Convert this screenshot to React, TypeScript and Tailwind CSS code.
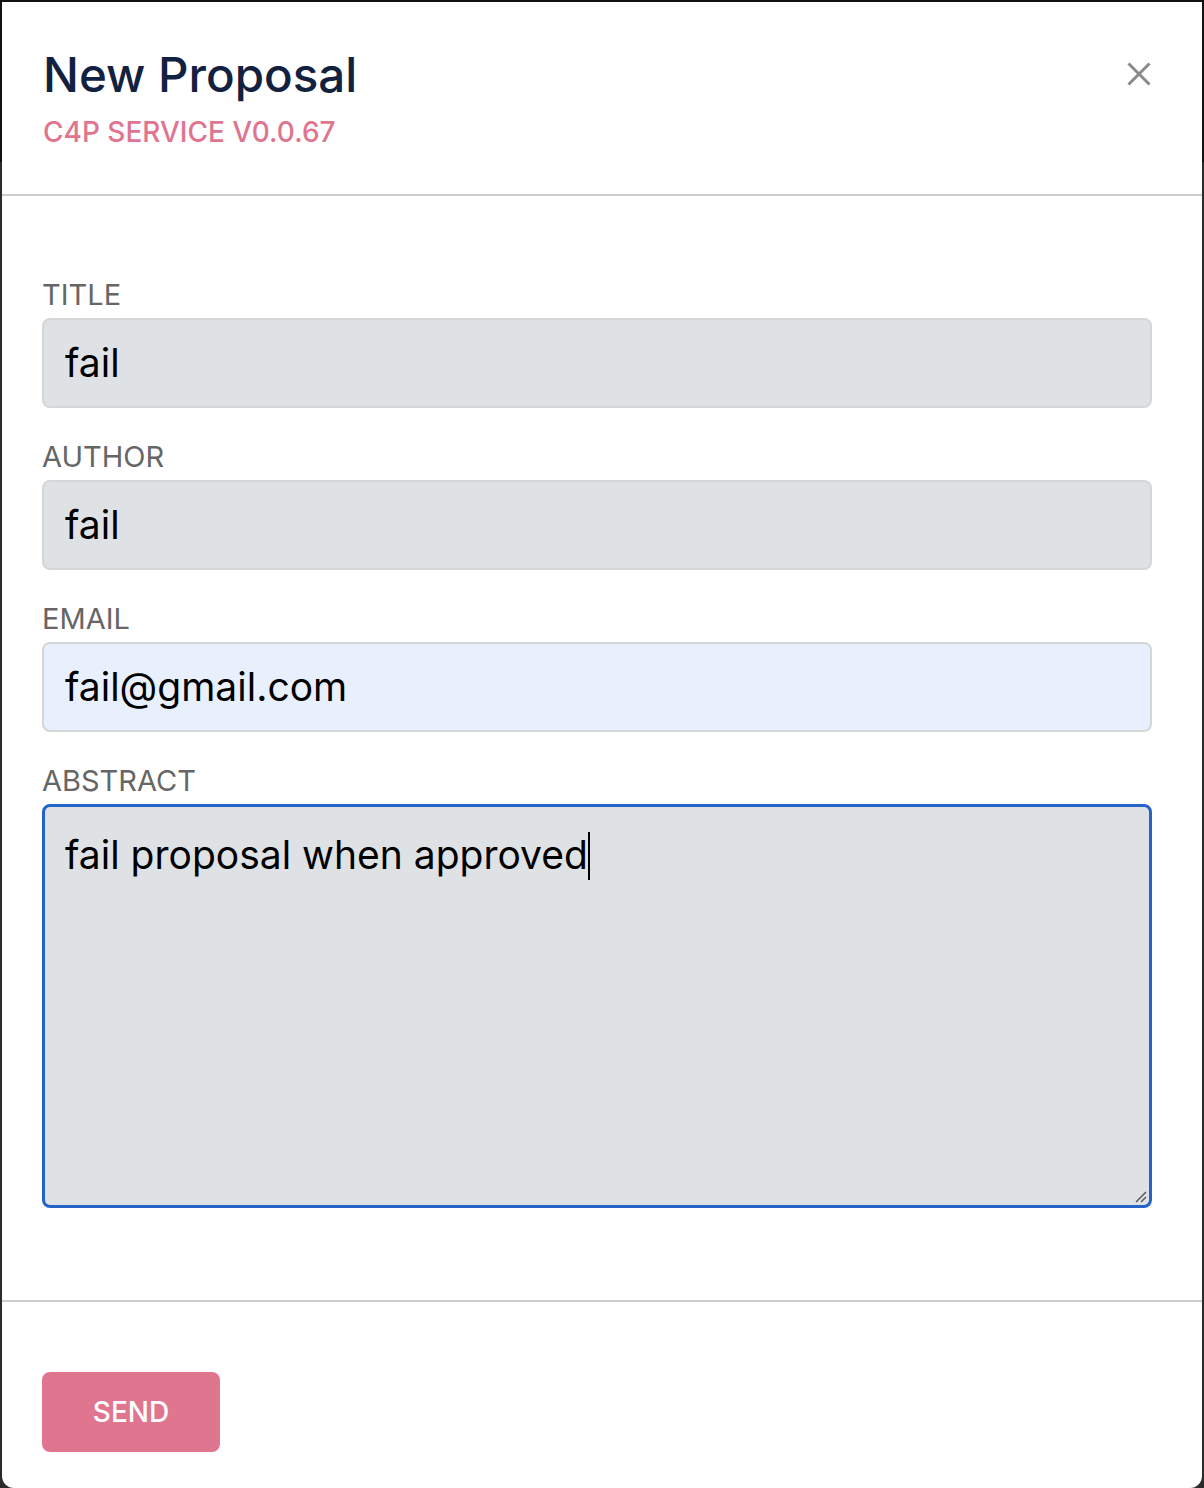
import React from "react";

function Field({ label, value, bg }: { label: string; value: string; bg: string }) {
  return (
    <div className="flex flex-col">
      <label className="text-[29px] leading-[34px] text-[#666666]">{label}</label>
      <div
        className={`mt-[6px] h-[90px] rounded-[8px] border-2 border-[#d4d6d8] ${bg} flex items-center px-[21px] text-[39px] text-black`}
      >
        {value}
      </div>
    </div>
  );
}

export default function App() {
  return (
    <div
      className="min-h-[1488px] w-full bg-[linear-gradient(to_bottom,#111111_162px,#2b2b2b_162px)] pt-[2px] px-[2px]"
      style={{ fontFamily: "Inter, 'Noto Sans', sans-serif" }}
    >
      <div className="bg-white min-h-[1486px] rounded-b-[12px] flex flex-col">
        <header className="flex items-start justify-between pl-[41px] pr-[51px] pt-[44px] pb-[45px]">
          <div className="flex flex-col">
            <h1 className="text-[47.5px] leading-[58px] font-medium text-[#12213f]">New Proposal</h1>
            <p className="mt-[11px] text-[28px] leading-[34px] font-medium text-[#e07590]">C4P SERVICE V0.0.67</p>
          </div>
          <button className="mt-[16px] w-[24px] h-[24px] flex items-center justify-center">
            <svg width="24" height="24" viewBox="0 0 24 24">
              <line x1="1.5" y1="1.5" x2="22.5" y2="22.5" stroke="#8a8a8a" strokeWidth="3" />
              <line x1="22.5" y1="1.5" x2="1.5" y2="22.5" stroke="#8a8a8a" strokeWidth="3" />
            </svg>
          </button>
        </header>
        <div className="h-[2px] bg-[#cccccc]" />
        <div className="pl-[40px] pr-[50px] pt-[82px] pb-[92px] flex flex-col gap-[32px]">
          <Field label="TITLE" value="fail" bg="bg-[#dfe2e5]" />
          <Field label="AUTHOR" value="fail" bg="bg-[#dfe2e5]" />
          <Field label="EMAIL" value="fail@gmail.com" bg="bg-[#e8f0fe]" />
          <div className="flex flex-col">
            <label className="text-[29px] leading-[34px] text-[#666666]">ABSTRACT</label>
            <div className="relative mt-[6px] h-[404px] rounded-[8px] border-[3px] border-[#2563c9] bg-[#dfe2e5] px-[20px] pt-[20px] text-[39px] leading-[56px] text-black">
              <span>fail proposal when approved</span>
              <span className="inline-block w-[2px] h-[48px] bg-black align-middle -mt-[4px]" />
              <svg className="absolute right-[2px] bottom-[2px]" width="14" height="14" viewBox="0 0 14 14">
                <line x1="13" y1="3" x2="3" y2="13" stroke="#555" strokeWidth="1.5" />
                <line x1="13" y1="8" x2="8" y2="13" stroke="#555" strokeWidth="1.5" />
              </svg>
            </div>
          </div>
        </div>
        <div className="h-[2px] bg-[#cccccc]" />
        <div className="px-[40px] pt-[70px]">
          <button className="w-[178px] h-[80px] rounded-[8px] bg-[#e07590] text-white text-[28px] font-medium">
            SEND
          </button>
        </div>
      </div>
    </div>
  );
}
